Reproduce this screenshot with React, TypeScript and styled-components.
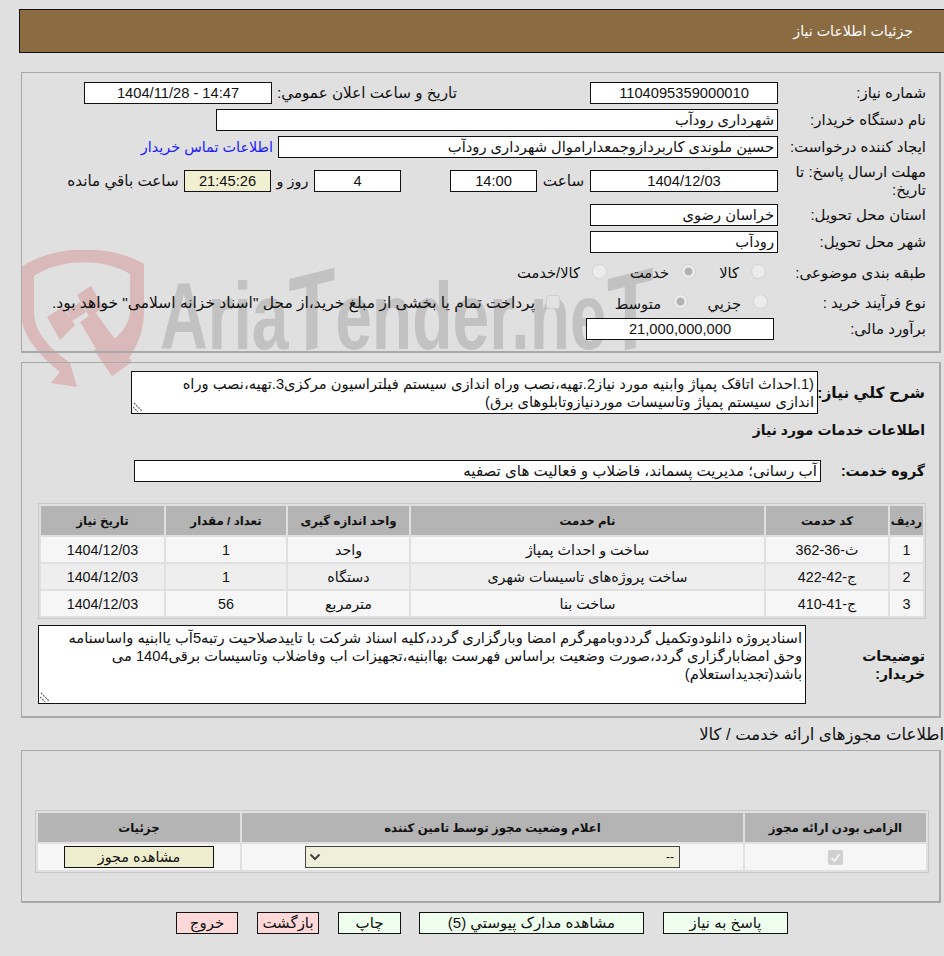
import styled, { createGlobalStyle } from "styled-components";

const GlobalStyle = createGlobalStyle`
  html, body {
    margin: 0;
    padding: 0;
    background: #e0e0e0;
  }
  body {
    font-family: "Liberation Sans", "DejaVu Sans", sans-serif;
    font-size: 14.7px;
    color: #111;
  }
`;

const Page = styled.div`
  position: relative;
  width: 944px;
  height: 956px;
  overflow: hidden;
  direction: rtl;
  padding-top: 9px;
  box-sizing: border-box;
`;

const Header = styled.div`
  height: 44px;
  margin: 0 0 0 19px;
  background: #8b6b42;
  border: 1px solid #111;
  border-right: 0;
  box-sizing: border-box;
  color: #fff;
  display: flex;
  align-items: center;
  padding-right: 31px;
  font-size: 14.2px;
`;

const Panel = styled.div<{ $h: number; $top: number }>`
  height: ${(p) => p.$h}px;
  margin: ${(p) => p.$top}px 3px 0 0;
  width: 920px;
  box-sizing: border-box;
  border: 1px solid #a9a9a9;
  border-bottom-width: 2px;
  border-right-width: 2px;
`;

const FormGrid = styled.div`
  display: grid;
  grid-template-columns: 161px 1fr;
  padding-top: 6px;
`;

const Label = styled.div<{ $h?: number }>`
  height: ${(p) => p.$h || 27}px;
  padding-right: 13px;
  display: flex;
  align-items: center;
  font-size: 15px;
  line-height: 18px;
`;

const Line = styled.div<{ $h?: number }>`
  height: ${(p) => p.$h || 27}px;
  display: flex;
  align-items: center;
`;

const Field = styled.div<{ $w: number; $bg?: string; $start?: boolean; $mr?: number; $size?: number }>`
  width: ${(p) => p.$w}px;
  height: 22px;
  margin-right: ${(p) => p.$mr || 0}px;
  box-sizing: border-box;
  flex: none;
  border: 1px solid #111;
  background: ${(p) => p.$bg || "#fff"};
  display: flex;
  align-items: center;
  justify-content: ${(p) => (p.$start ? "flex-start" : "center")};
  padding: 0 3px;
  font-size: ${(p) => p.$size || 14.7}px;
  white-space: nowrap;
  overflow: hidden;
`;

const Num = styled.span`
  direction: ltr;
`;

const Caption = styled.span<{ $w?: number; $end?: boolean; $size?: number }>`
  white-space: nowrap;
  flex: none;
  width: ${(p) => (p.$w ? `${p.$w}px` : "auto")};
  text-align: ${(p) => (p.$end ? "left" : "center")};
  padding-left: ${(p) => (p.$end ? 5 : 0)}px;
  box-sizing: border-box;
  font-size: ${(p) => p.$size || 15.2}px;
`;

const Link = styled.a`
  color: #1a1aff;
  margin-right: 5px;
  font-size: 14.4px;
  white-space: nowrap;
`;

const Radio = styled.span<{ $on?: boolean }>`
  width: 15px;
  height: 15px;
  margin-bottom: 3px;
  border-radius: 50%;
  flex: none;
  box-sizing: border-box;
  border: 1px solid #d2d2d2;
  background: ${(p) =>
    p.$on
      ? "radial-gradient(circle, #b2b2b2 0 3.5px, #ececec 4.5px)"
      : "#ececec"};
`;

const Choice = styled.div<{ $w: number; $pad?: number }>`
  width: ${(p) => p.$w}px;
  padding-right: ${(p) => p.$pad || 0}px;
  box-sizing: border-box;
  flex: none;
  display: flex;
  align-items: center;
  gap: 12px;
  white-space: nowrap;
`;

const Square = styled.span`
  width: 14px;
  height: 14px;
  flex: none;
  margin: 0 0 3px 11px;
  box-sizing: border-box;
  border: 1px solid #cfcfcf;
  border-radius: 3px;
  background: #e2e2e2;
`;

const Note = styled.div<{ $h: number; $w: number; $pl?: number }>`
  position: relative;
  width: ${(p) => p.$w}px;
  height: ${(p) => p.$h}px;
  box-sizing: border-box;
  flex: none;
  background: #fff;
  border: 1px solid #111;
  padding: 3px 3px 0 ${(p) => p.$pl || 3}px;
  line-height: 18px;
`;

const Grip = styled.svg`
  position: absolute;
  left: 1px;
  bottom: 1px;
`;

const BoldLabel = styled.div<{ $w: number; $size?: number }>`
  width: ${(p) => p.$w}px;
  padding-right: 14px;
  box-sizing: border-box;
  flex: none;
  font-weight: bold;
  font-size: ${(p) => p.$size || 14}px;
  line-height: 18px;
  white-space: nowrap;
`;

const Row = styled.div<{ $top?: number }>`
  display: flex;
  align-items: center;
  margin-top: ${(p) => p.$top || 0}px;
`;

const SectionTitle = styled.div`
  padding-right: 14px;
  font-weight: bold;
  font-size: 14px;
  margin-top: 7px;
  height: 18px;
  line-height: 18px;
`;

const Table = styled.table<{ $w: number; $top: number; $mr: number }>`
  width: ${(p) => p.$w}px;
  margin: ${(p) => p.$top}px ${(p) => p.$mr}px 0 0;
  table-layout: fixed;
  border-collapse: separate;
  border-spacing: 2px;
  border: 1px solid #c8c8c8;
`;

const Th = styled.th<{ $w: number }>`
  width: ${(p) => p.$w}px;
  height: 29px;
  padding: 0;
  background: #b4b4b4;
  font-size: 11.8px;
  font-weight: bold;
  text-align: center;
`;

const Td = styled.td<{ $alt?: boolean; $h?: number }>`
  height: ${(p) => p.$h || 25}px;
  padding: 0;
  background: ${(p) => (p.$alt ? "#eeeeee" : "#f6f6f6")};
  text-align: center;
  font-size: 14.3px;
`;

const SubHeading = styled.div`
  margin: 7px 0 0 0;
  height: 25px;
  line-height: 18px;
  font-size: 16.5px;
  white-space: nowrap;
`;

const CheckBox = styled.span`
  display: inline-flex;
  align-items: center;
  justify-content: center;
  width: 15px;
  height: 15px;
  border-radius: 2px;
  background: #d0d0d0;
  vertical-align: middle;
`;

const SelectBox = styled.div`
  width: 375px;
  height: 22px;
  margin: 0 auto;
  box-sizing: border-box;
  border: 1px solid #444;
  background: #f0efd9;
  display: flex;
  align-items: center;
  justify-content: space-between;
  padding: 0 5px 0 3px;
  font-size: 12px;
`;

const PermitButton = styled.div`
  width: 150px;
  height: 22px;
  margin: 0 auto;
  box-sizing: border-box;
  border: 1px solid #111;
  background: #eeedcd;
  display: flex;
  align-items: center;
  justify-content: center;
`;

const Footer = styled.div`
  display: flex;
  gap: 19px;
  margin-top: 9px;
  padding-right: 156px;
`;

const Action = styled.button<{ $w: number; $danger?: boolean; $mr?: number }>`
  width: ${(p) => p.$w}px;
  height: 22px;
  margin-right: ${(p) => p.$mr || 0}px;
  padding: 0;
  border: 1px solid #111;
  background: ${(p) => (p.$danger ? "#ffd9d9" : "#eeffee")};
  font-family: inherit;
  font-size: 15px;
  color: #111;
`;

const Watermark = styled.div`
  position: absolute;
  left: 20px;
  top: 250px;
  width: 640px;
  height: 140px;
  direction: ltr;
  pointer-events: none;
`;

const WatermarkShield = styled.svg`
  position: absolute;
  left: 0;
  top: 0;
`;

const WatermarkText = styled.div`
  position: absolute;
  left: 140px;
  top: 11px;
  font-family: "Liberation Sans", sans-serif;
  font-weight: bold;
  font-size: 95px;
  line-height: 110px;
  color: #c2c2c2;
  transform: scaleX(0.695);
  transform-origin: left top;
  white-space: nowrap;
`;

const BigT = styled.span`
  display: inline-block;
  font-size: 110px;
  line-height: 100px;
  transform: skewY(-10deg);
`;

const Front = styled.div`
  position: relative;
`;

const services = [
  { code: "ث-36-362", name: "ساخت و احداث پمپاژ", unit: "واحد", qty: "1" },
  { code: "ج-42-422", name: "ساخت پروژه‌های تاسیسات شهری", unit: "دستگاه", qty: "1" },
  { code: "ج-41-410", name: "ساخت بنا", unit: "مترمربع", qty: "56" },
];

function ResizeGrip() {
  return (
    <Grip width="10" height="10" viewBox="0 0 10 10">
      <path d="M1 1l8 8M0 5l5 5" stroke="#666" strokeWidth="1.2" strokeDasharray="2 1" fill="none" />
    </Grip>
  );
}

function App() {
  return (
    <>
      <GlobalStyle />
      <Page>
        <Watermark>
          <WatermarkShield width="130" height="140" viewBox="0 0 130 140">
            <path
              d="M1 17C35 -6 90 -6 124 14V62C124 88 110 112 92 126L74 100C95 92 110 78 110 60V24C85 8 40 8 14 26V62C14 76 22 90 37 103L50 113L57 137L31 133L40 122C18 104 1 85 1 62Z"
              fill="#d9b9b9"
            />
            <path d="M27 67L43 57L55 75L40 90ZM57 45L71 36L83 57L70 68ZM47 61L60 52L66 62L52 71ZM60 72L75 62L112 112L92 126Z" fill="#d9b9b9" />
          </WatermarkShield>
          <WatermarkText>
            Aria<BigT>T</BigT>ender.ne<BigT>T</BigT>
          </WatermarkText>
        </Watermark>
        <Front>
          <Header>جزئیات اطلاعات نیاز</Header>
          <Panel $h={281} $top={19}>
            <FormGrid>
              <Label>شماره نیاز:</Label>
              <Line>
                <Field $w={188}><Num>1104095359000010</Num></Field>
                <Caption $w={318} $end>تاريخ و ساعت اعلان عمومي:</Caption>
                <Field $w={188}><Num>1404/11/28 - 14:47</Num></Field>
              </Line>
              <Label>نام دستگاه خریدار:</Label>
              <Line>
                <Field $w={562} $start>شهرداری رودآب</Field>
              </Line>
              <Label>ایجاد کننده درخواست:</Label>
              <Line>
                <Field $w={500} $start>حسین ملوندی کاربردازوجمعداراموال شهرداری رودآب</Field>
                <Link>اطلاعات تماس خریدار</Link>
              </Line>
              <Label $h={41}>مهلت ارسال پاسخ: تا تاریخ:</Label>
              <Line $h={41}>
                <Field $w={188}><Num>1404/12/03</Num></Field>
                <Caption $w={53}>ساعت</Caption>
                <Field $w={87}><Num>14:00</Num></Field>
                <Field $w={87} $mr={49}><Num>4</Num></Field>
                <Caption $w={43} $size={14.4}>روز و</Caption>
                <Field $w={87} $bg="#f0efd2"><Num>21:45:26</Num></Field>
                <Caption $w={122}>ساعت باقي مانده</Caption>
              </Line>
              <Label>استان محل تحویل:</Label>
              <Line>
                <Field $w={188} $start>خراسان رضوی</Field>
              </Line>
              <Label>شهر محل تحویل:</Label>
              <Line>
                <Field $w={188} $start>رودآب</Field>
              </Line>
              <Label $h={35}>طبقه بندی موضوعی:</Label>
              <Line $h={35}>
                <Choice $w={82} $pad={12}><Radio />کالا</Choice>
                <Choice $w={89}><Radio $on />خدمت</Choice>
                <Choice $w={140}><Radio />کالا/خدمت</Choice>
              </Line>
              <Label $h={26}>نوع فرآیند خرید :</Label>
              <Line $h={26}>
                <Choice $w={90} $pad={10}><Radio />جزيي</Choice>
                <Choice $w={128}><Radio $on />متوسط</Choice>
                <Square />
                <Caption $size={15.5}>پرداخت تمام یا بخشی از مبلغ خرید،از محل "اسناد خزانه اسلامی" خواهد بود.</Caption>
              </Line>
              <Label $h={25}>برآورد مالی:</Label>
              <Line $h={25}>
                <Field $w={188} $mr={4}><Num>21,000,000,000</Num></Field>
              </Line>
            </FormGrid>
          </Panel>
          <Panel $h={356} $top={9}>
            <Row $top={8}>
              <BoldLabel $w={121} $size={15.5}>شرح كلي نیاز:</BoldLabel>
              <Note $w={687} $h={43} $pl={20}>
                (1.احداث اتاقک پمپاژ وابنیه مورد نیاز2.تهیه،نصب وراه اندازی سیستم فیلتراسیون مرکزی3.تهیه،نصب وراه اندازی سیستم پمپاژ وتاسیسات موردنیازوتابلوهای برق)
                <ResizeGrip />
              </Note>
            </Row>
            <SectionTitle>اطلاعات خدمات مورد نیاز</SectionTitle>
            <Row $top={21}>
              <BoldLabel $w={118}>گروه خدمت:</BoldLabel>
              <Field $w={687} $start $size={15.1}>آب رسانی؛ مدیریت پسماند، فاضلاب و فعالیت های تصفیه</Field>
            </Row>
            <Table $w={888} $top={21} $mr={13}>
              <thead>
                <tr>
                  <Th $w={33}>ردیف</Th>
                  <Th $w={122}>کد خدمت</Th>
                  <Th $w={353}>نام خدمت</Th>
                  <Th $w={121}>واحد اندازه گیری</Th>
                  <Th $w={120}>تعداد / مقدار</Th>
                  <Th $w={123}>تاریخ نیاز</Th>
                </tr>
              </thead>
              <tbody>
                {services.map((s, i) => (
                  <tr key={s.code}>
                    <Td $alt={i === 1}><Num>{i + 1}</Num></Td>
                    <Td $alt={i === 1}>{s.code}</Td>
                    <Td $alt={i === 1}>{s.name}</Td>
                    <Td $alt={i === 1}>{s.unit}</Td>
                    <Td $alt={i === 1}><Num>{s.qty}</Num></Td>
                    <Td $alt={i === 1}><Num>1404/12/03</Num></Td>
                  </tr>
                ))}
              </tbody>
            </Table>
            <Row $top={6}>
              <BoldLabel $w={133}>توضیحات<br />خریدار:</BoldLabel>
              <Note $w={768} $h={79}>
                اسنادپروژه دانلودوتکمیل گرددوبامهرگرم امضا وبارگزاری گردد،کلیه اسناد شرکت با تاییدصلاحیت رتبه5آب یاابنیه واساسنامه وحق امضابارگزاری گردد،صورت وضعیت براساس فهرست بهاابنیه،تجهیزات اب وفاضلاب وتاسیسات برقی1404 می باشد(تجدیداستعلام)
                <ResizeGrip />
              </Note>
            </Row>
          </Panel>
          <SubHeading>اطلاعات مجوزهای ارائه خدمت / کالا</SubHeading>
          <Panel $h={153} $top={0}>
            <Table $w={894} $top={59} $mr={10}>
              <thead>
                <tr>
                  <Th $w={181}>الزامی بودن ارائه مجوز</Th>
                  <Th $w={501}>اعلام وضعیت مجوز توسط تامین کننده</Th>
                  <Th $w={202}>جزئیات</Th>
                </tr>
              </thead>
              <tbody>
                <tr>
                  <Td $h={26}>
                    <CheckBox>
                      <svg width="11" height="11" viewBox="0 0 11 11">
                        <path d="M1.5 6l3 3 5-7" stroke="#f4f4f4" strokeWidth="2" fill="none" />
                      </svg>
                    </CheckBox>
                  </Td>
                  <Td $h={26}>
                    <SelectBox>
                      <span>--</span>
                      <svg width="12" height="8" viewBox="0 0 12 8">
                        <path d="M1.5 1.5L6 6l4.5-4.5" stroke="#444" strokeWidth="2" fill="none" />
                      </svg>
                    </SelectBox>
                  </Td>
                  <Td $h={26}>
                    <PermitButton>مشاهده مجوز</PermitButton>
                  </Td>
                </tr>
              </tbody>
            </Table>
          </Panel>
          <Footer>
            <Action $w={125}>پاسخ به نیاز</Action>
            <Action $w={225}>مشاهده مدارک پیوستي (5)</Action>
            <Action $w={63} $mr={-1}>چاپ</Action>
            <Action $w={62} $danger>بازگشت</Action>
            <Action $w={62} $danger>خروج</Action>
          </Footer>
        </Front>
      </Page>
    </>
  );
}

export default App;
